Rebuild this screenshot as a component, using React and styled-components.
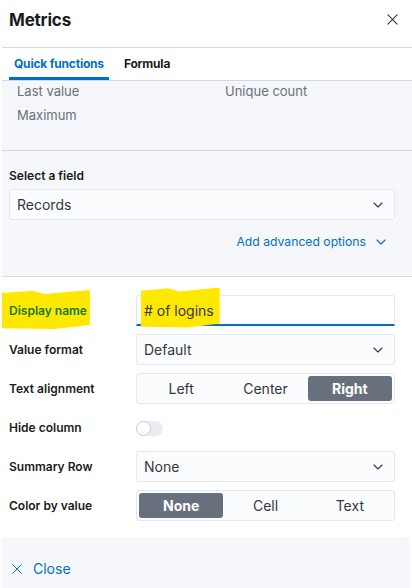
import React from 'react';
import styled, { createGlobalStyle } from 'styled-components';

const Global = createGlobalStyle`
    html, body {
        margin: 0;
        padding: 0;
        background: #fff;
    }
    body {
        font-family: Inter, "Noto Sans", sans-serif;
        color: #1a1c21;
    }
`;

const Chevron = ({ color = '#343741' }) => (
    <svg width="10" height="6" viewBox="0 0 10 6" fill="none">
        <path d="M1 1l4 4 4-4" stroke={color} strokeWidth="1.1" strokeLinecap="round" strokeLinejoin="round" />
    </svg>
);

const Cross = ({ size = 12, color = '#343741' }) => (
    <svg width={size} height={size} viewBox="0 0 12 12" fill="none">
        <path d="M1 1l10 10M11 1L1 11" stroke={color} strokeWidth="1.2" strokeLinecap="round" />
    </svg>
);

const App = () => {
    return (
        <>
            <Global />
            <Flyout>
                <Header>
                    <h2>Metrics</h2>
                    <CloseIcon>
                        <Cross size={11} />
                    </CloseIcon>
                </Header>

                <Tabs>
                    <Tab active>Quick functions</Tab>
                    <Tab>Formula</Tab>
                </Tabs>

                <FunctionList>
                    <span>Last value</span>
                    <span>Unique count</span>
                    <span>Maximum</span>
                </FunctionList>

                <FieldSection>
                    <FieldLabel>Select a field</FieldLabel>
                    <Select fixed>
                        Records
                        <Chevron />
                    </Select>
                    <Advanced>
                        Add advanced options
                        <Chevron color="#0071c2" />
                    </Advanced>
                </FieldSection>

                <Form>
                    <Row>
                        <Label green>
                            <Highlight wide>Display name</Highlight>
                        </Label>
                        <TextInput>
                            <Highlight>
                                # of login<span>s</span>
                            </Highlight>
                        </TextInput>
                    </Row>
                    <Row>
                        <Label>Value format</Label>
                        <Select>
                            Default
                            <Chevron />
                        </Select>
                    </Row>
                    <Row>
                        <Label>Text alignment</Label>
                        <ButtonGroup>
                            <GroupButton>Left</GroupButton>
                            <GroupButton>Center</GroupButton>
                            <GroupButton selected>Right</GroupButton>
                        </ButtonGroup>
                    </Row>
                    <Row>
                        <Label>Hide column</Label>
                        <Switch>
                            <i />
                        </Switch>
                    </Row>
                    <Row>
                        <Label>Summary Row</Label>
                        <Select>
                            None
                            <Chevron />
                        </Select>
                    </Row>
                    <Row>
                        <Label>Color by value</Label>
                        <ButtonGroup>
                            <GroupButton selected>None</GroupButton>
                            <GroupButton>Cell</GroupButton>
                            <GroupButton>Text</GroupButton>
                        </ButtonGroup>
                    </Row>
                </Form>

                <Footer>
                    <CloseLink>
                        <Cross size={10} color="#0071c2" />
                        Close
                    </CloseLink>
                </Footer>
            </Flyout>
        </>
    );
};

const Flyout = styled.div`
    width: 410px;
    margin-left: 2px;
    height: 588px;
    display: flex;
    flex-direction: column;
    background: #fff;
`;

const Header = styled.header`
    height: 48px;
    border-bottom: 1px solid #d3dae6;
    display: flex;
    align-items: center;
    justify-content: space-between;
    padding: 0 14px 8px 7px;
    box-sizing: border-box;

    h2 {
        margin: 0;
        font-size: 17px;
        font-weight: 700;
        color: #1a1c21;
        letter-spacing: -0.2px;
    }
`;

const CloseIcon = styled.span`
    display: flex;
    align-items: center;
`;

const Tabs = styled.nav`
    display: flex;
    height: 32px;
    border-bottom: 1px solid #d3dae6;
    padding-left: 7px;
`;

const Tab = styled.div`
    padding: 0 5px 2px;
    margin-right: 10px;
    display: flex;
    align-items: center;
    font-size: 12px;
    font-weight: 700;
    letter-spacing: -0.2px;
    color: ${(p) => (p.active ? '#0071c2' : '#1a1c21')};
    box-shadow: ${(p) => (p.active ? 'inset 0 -3px 0 #0071c2' : 'none')};
`;

const FunctionList = styled.div`
    background: #f5f7fa;
    height: 69px;
    border-bottom: 1px solid #d3dae6;
    display: grid;
    grid-template-columns: 208px 1fr;
    grid-auto-rows: 24px;
    padding: 0 15px;
    align-content: start;
    font-size: 13px;
    color: #69707d;

    span {
        line-height: 20px;
    }
`;

const FieldSection = styled.section`
    background: #f5f7fa;
    height: 126px;
    border-bottom: 1px solid #d3dae6;
    padding: 17px 17px 0 7px;
    box-sizing: border-box;
    display: flex;
    flex-direction: column;
`;

const FieldLabel = styled.div`
    font-size: 12px;
    font-weight: 600;
    color: #1a1c21;
    margin-bottom: 6px;
`;

const Select = styled.div`
    flex: ${(p) => (p.fixed ? 'none' : '1')};
    height: 31px;
    box-sizing: border-box;
    border: 1px solid #e3e7ef;
    border-radius: 3px;
    background: #fbfcfd;
    display: flex;
    align-items: center;
    justify-content: space-between;
    padding: 0 11px 0 7px;
    font-size: 14px;
    color: #343741;
`;

const Advanced = styled.div`
    align-self: flex-end;
    margin-top: 14px;
    margin-right: 9px;
    display: flex;
    align-items: center;
    gap: 10px;
    font-size: 12.2px;
    color: #0071c2;
`;

const Form = styled.section`
    flex: 1;
    padding: 18px 17px 0 7px;
    display: flex;
    flex-direction: column;
    gap: 8px;
`;

const Row = styled.div`
    display: flex;
    align-items: center;
    height: 31px;
`;

const Label = styled.div`
    width: 127px;
    flex-shrink: 0;
    font-size: 12px;
    font-weight: 600;
    color: ${(p) => (p.green ? '#167b12' : '#1a1c21')};
`;

const Highlight = styled.span`
    position: relative;
    z-index: 0;

    &::before {
        content: '';
        position: absolute;
        z-index: -1;
        background: #ffe800;
        left: ${(p) => (p.wide ? '-7px' : '-3px')};
        right: ${(p) => (p.wide ? '-3px' : '-6px')};
        top: ${(p) => (p.wide ? '-13px' : '-14px')};
        bottom: ${(p) => (p.wide ? '-11px' : '-9px')};
        clip-path: polygon(0 8%, 35% 2%, 48% 10%, 100% 0, 100% 90%, 60% 100%, 0 98%);
    }

    span {
        position: relative;
    }
`;

const TextInput = styled.div`
    flex: 1;
    height: 31px;
    box-sizing: border-box;
    border: 1px solid #e3e7ef;
    border-bottom: 2px solid #0071c2;
    border-radius: 3px 3px 0 0;
    background: #fff;
    display: flex;
    align-items: center;
    padding: 0 7px;
    font-size: 14px;
    color: #343741;
`;

const ButtonGroup = styled.div`
    flex: 1;
    height: 31px;
    box-sizing: border-box;
    border: 1px solid #e3e7ef;
    border-radius: 3px;
    background: #fbfcfd;
    padding: 2px;
    display: grid;
    grid-template-columns: 1fr 1fr 1fr;
`;

const GroupButton = styled.div`
    display: flex;
    align-items: center;
    justify-content: center;
    border-radius: 3px;
    font-size: 14px;
    font-weight: ${(p) => (p.selected ? 700 : 400)};
    background: ${(p) => (p.selected ? '#69707d' : 'transparent')};
    color: ${(p) => (p.selected ? '#fff' : '#343741')};
`;

const Switch = styled.div`
    width: 27px;
    height: 15px;
    border-radius: 8px;
    background: #e9edf3;
    position: relative;
    margin-top: 2px;

    i {
        position: absolute;
        left: 0;
        top: 0;
        width: 15px;
        height: 15px;
        box-sizing: border-box;
        border-radius: 50%;
        background: #fff;
        border: 1px solid #c6ccd5;
    }
`;

const Footer = styled.footer`
    height: 51px;
    background: #f5f7fa;
    margin-right: 2px;
    display: flex;
    align-items: center;
    padding: 12px 10px 0;
    box-sizing: border-box;
`;

const CloseLink = styled.div`
    display: flex;
    align-items: center;
    gap: 11px;
    font-size: 14px;
    color: #0071c2;
`;

export default App;
